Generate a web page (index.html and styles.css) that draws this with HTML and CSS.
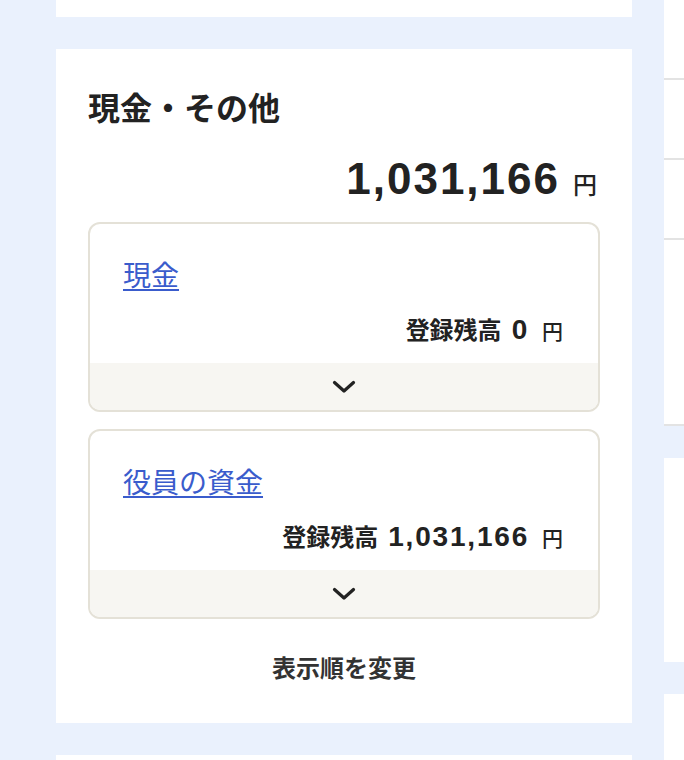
FILE: index.html
```html
<!DOCTYPE html>
<html lang="ja">
<head>
<meta charset="utf-8">
<title>現金・その他</title>
<link rel="stylesheet" href="styles.css">
</head>
<body>
<div class="page">
  <main class="main-col">
    <section class="panel panel-stub"></section>
    <section class="panel">
      <h2 class="panel-title">現金・その他</h2>
      <div class="total"><span class="total-num">1,031,166</span><span class="total-unit">円</span></div>

      <div class="account">
        <div class="account-body">
          <a class="account-name" href="#">現金</a>
          <div class="balance"><span class="balance-label">登録残高</span><span class="balance-num">0</span><span class="balance-unit">円</span></div>
        </div>
        <div class="account-toggle">
          <svg class="chev" width="24" height="14" viewBox="0 0 24 14"><polyline points="2.5,2.5 12,11 21.5,2.5" fill="none" stroke="#222" stroke-width="3.2" stroke-linecap="round" stroke-linejoin="round"/></svg>
        </div>
      </div>

      <div class="account">
        <div class="account-body">
          <a class="account-name" href="#">役員の資金</a>
          <div class="balance"><span class="balance-label">登録残高</span><span class="balance-num">1,031,166</span><span class="balance-unit">円</span></div>
        </div>
        <div class="account-toggle">
          <svg class="chev" width="24" height="14" viewBox="0 0 24 14"><polyline points="2.5,2.5 12,11 21.5,2.5" fill="none" stroke="#222" stroke-width="3.2" stroke-linecap="round" stroke-linejoin="round"/></svg>
        </div>
      </div>

      <div class="reorder">表示順を変更</div>
    </section>
    <section class="panel panel-next"></section>
  </main>
  <aside class="side-col">
    <div class="side-box">
      <div class="side-row"></div>
      <div class="side-row"></div>
      <div class="side-row"></div>
      <div class="side-row side-row-tall"></div>
    </div>
    <div class="side-box side-box-mid"></div>
    <div class="side-box side-box-next"></div>
  </aside>
</div>
</body>
</html>
```

FILE: styles.css
```css
* { box-sizing: border-box; }

html, body {
  margin: 0;
  padding: 0;
  height: 100%;
  overflow: hidden;
  background: #eaf1fd;
  font-family: "Liberation Sans", "Noto Sans CJK JP", sans-serif;
  color: #222;
}

.page {
  display: flex;
  gap: 32px;
  padding-left: 56px;
  width: 1000px;
}

.main-col {
  width: 576px;
  flex: none;
  display: flex;
  flex-direction: column;
  gap: 32px;
}

.panel {
  background: #fff;
  padding: 35px 32px 38px;
}

.panel-stub {
  height: 17px;
  padding: 0;
}

.panel-next {
  height: 100px;
  padding: 0;
}

.panel-title {
  margin: 0;
  font-family: "Noto Sans CJK JP", sans-serif;
  font-size: 32px;
  line-height: 44px;
  font-weight: 700;
  color: #222;
}

.total {
  margin-top: 26px;
  height: 50px;
  display: flex;
  justify-content: flex-end;
  align-items: baseline;
  padding-right: 3px;
}

.total-num {
  font-size: 44px;
  line-height: 50px;
  font-weight: 700;
  letter-spacing: 2px;
}

.total-unit {
  margin-left: 13px;
  font-family: "Noto Sans CJK JP", sans-serif;
  font-size: 24px;
  line-height: 1;
  font-weight: 500;
}

.account {
  margin-top: 18px;
  border: 2px solid #e4e1d7;
  border-radius: 12px;
  overflow: hidden;
}

.account + .account {
  margin-top: 17px;
}

.account-body {
  padding: 30px 33px 15px;
  display: flex;
  flex-direction: column;
}

.account-name {
  align-self: flex-start;
  font-family: "Noto Sans CJK JP", sans-serif;
  font-size: 28px;
  line-height: 40px;
  height: 40px;
  color: #3a5ccc;
  text-decoration: underline;
  text-underline-offset: 3px;
  text-decoration-thickness: 2px;
}

.balance {
  margin-top: 18px;
  height: 36px;
  display: flex;
  justify-content: flex-end;
  align-items: baseline;
  padding-right: 2px;
}

.balance-label {
  font-family: "Noto Sans CJK JP", sans-serif;
  font-size: 24px;
  line-height: 1;
  font-weight: 700;
  margin-right: 10px;
}

.balance-num {
  font-size: 28px;
  line-height: 36px;
  font-weight: 700;
  letter-spacing: 1.8px;
}

.balance-unit {
  margin-left: 13px;
  font-family: "Noto Sans CJK JP", sans-serif;
  font-size: 21px;
  line-height: 1;
  font-weight: 500;
}

.account-toggle {
  height: 47px;
  background: #f7f6f2;
  display: flex;
  align-items: center;
  justify-content: center;
}

.chev {
  display: block;
}

.reorder {
  margin-top: 30px;
  height: 36px;
  text-align: center;
  font-family: "Noto Sans CJK JP", sans-serif;
  font-size: 24px;
  line-height: 36px;
  font-weight: 700;
  color: #333;
}

.side-col {
  width: 300px;
  flex: none;
  display: flex;
  flex-direction: column;
  gap: 32px;
}

.side-box {
  background: #fff;
}

.side-row {
  height: 80px;
  border-bottom: 2px solid #e3e3e3;
}

.side-row-tall {
  height: 186px;
}

.side-box-mid {
  height: 204px;
}

.side-box-next {
  height: 100px;
}
```
